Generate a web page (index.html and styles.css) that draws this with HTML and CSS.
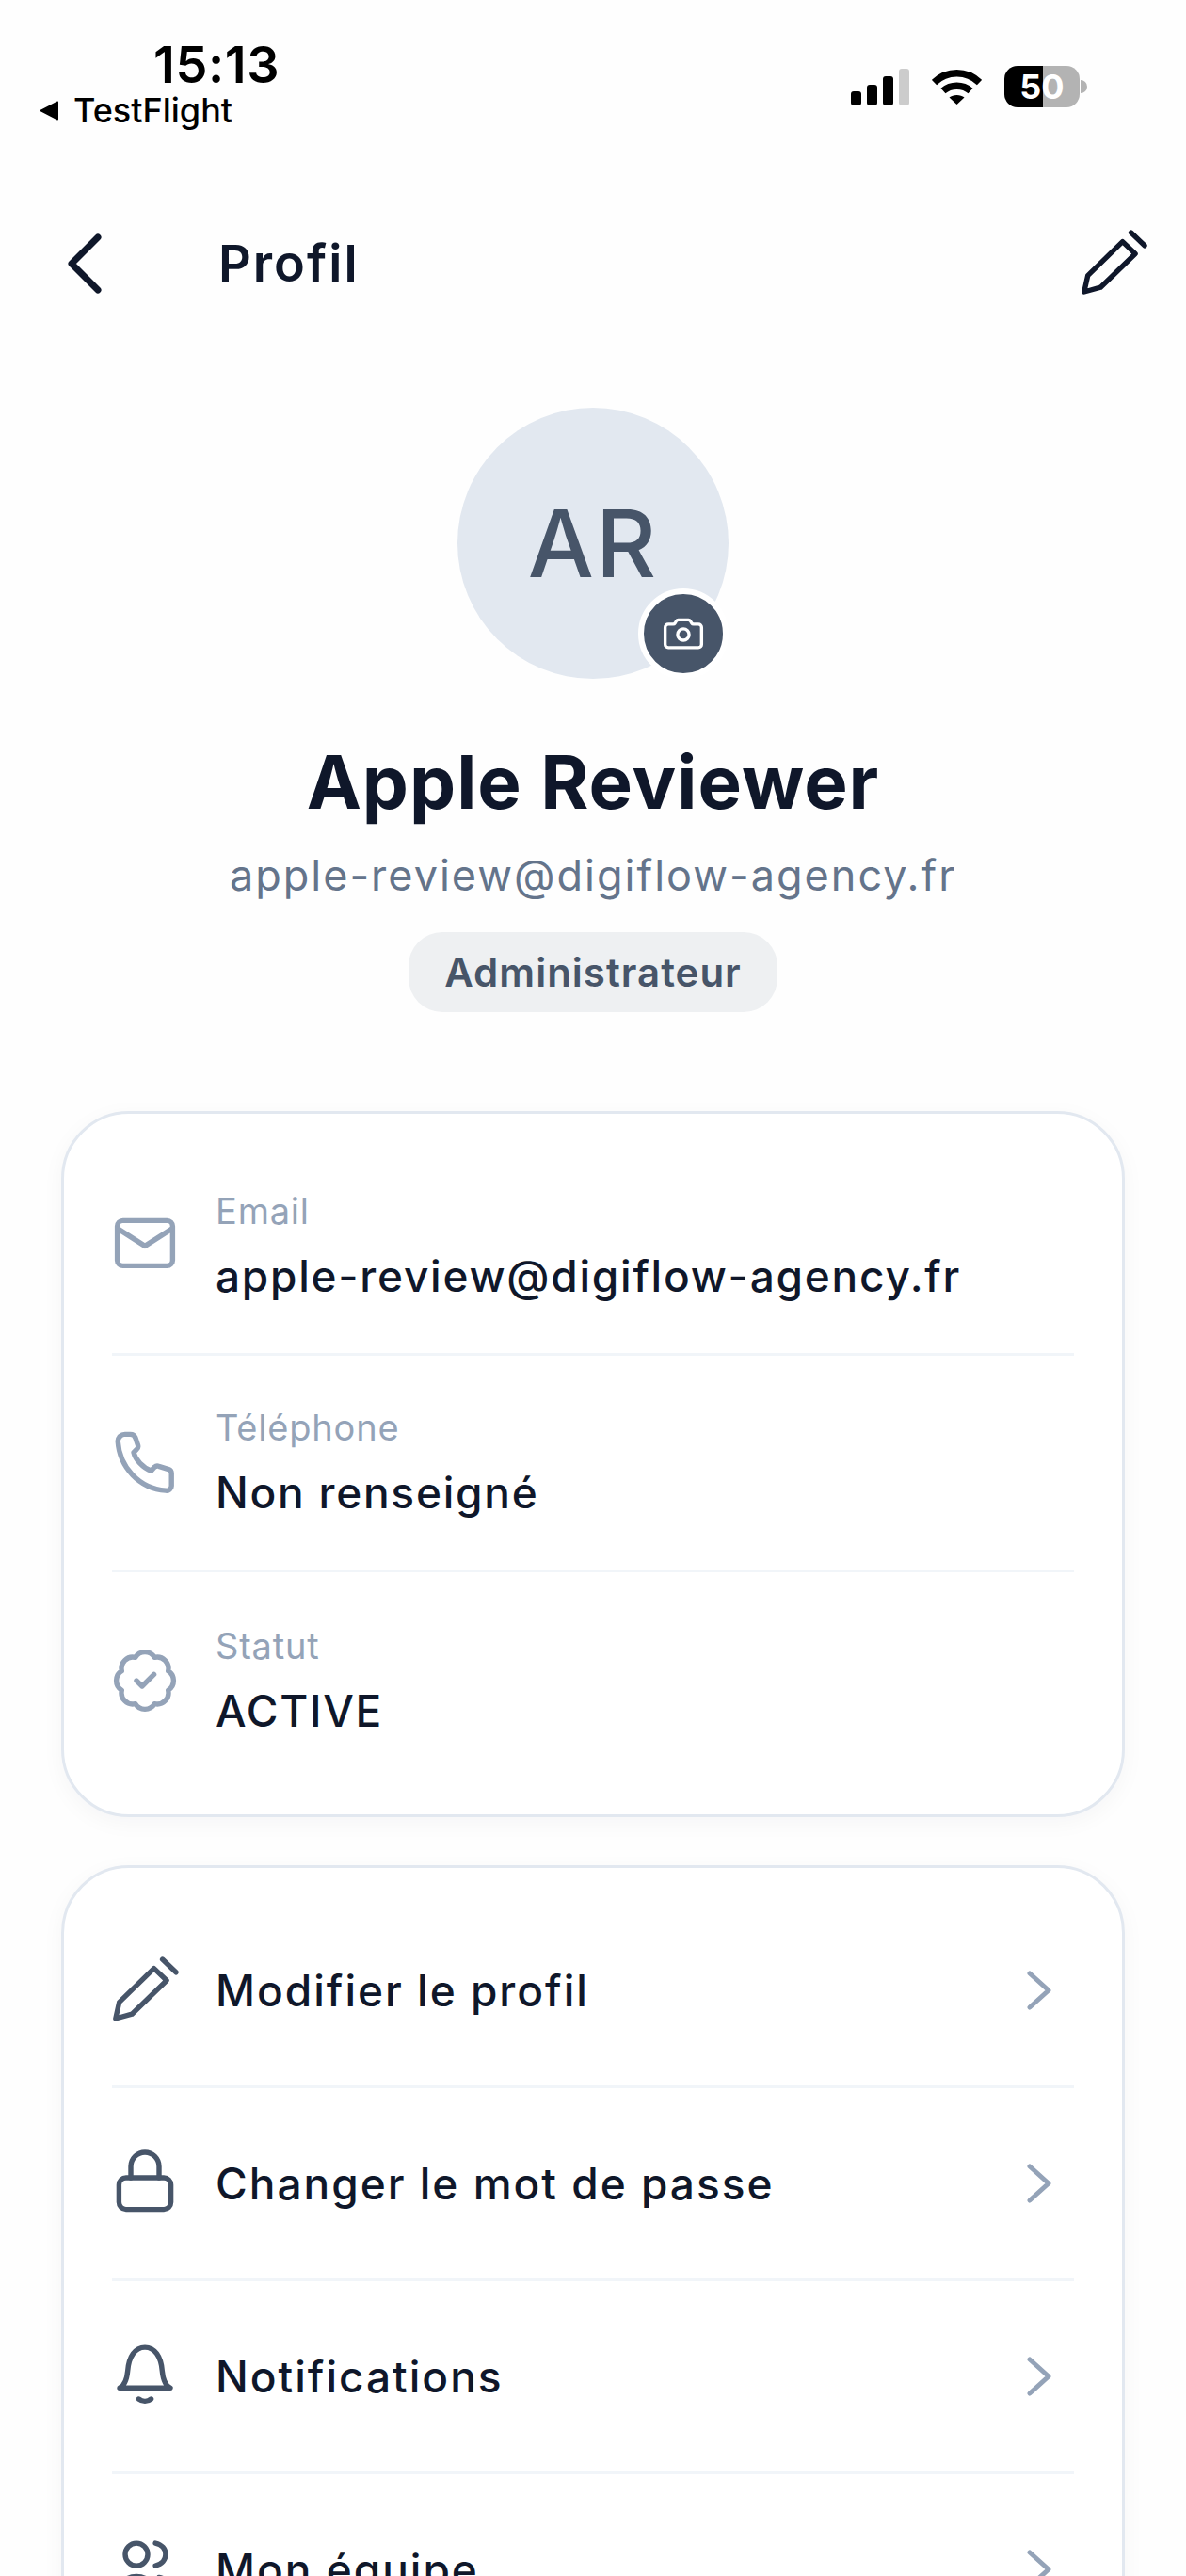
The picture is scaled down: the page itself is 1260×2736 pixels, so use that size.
FILE: index.html
```html
<!DOCTYPE html>
<html lang="fr">
<head>
  <title>Profil</title>
  <meta charset="UTF-8">
  <meta name="viewport" content="width=device-width, initial-scale=1">
  <link rel="stylesheet" href="styles.css">
</head>
<body>
  <div class="screen">
    <div class="status-bar">
      <div class="status-left">
        <div class="time">15:13</div>
        <div class="back-app">
          <svg class="back-arrow" viewBox="0 0 23 21"><path d="M21 1.500v18a1 1 0 0 1-1.600.8L2 11.200a.9.9 0 0 1 0-1.400L19.400.7A1 1 0 0 1 21 1.500z"/></svg>
          <span>TestFlight</span>
        </div>
      </div>
      <div class="status-right">
        <div class="signal">
          <span class="bar bar-1"></span>
          <span class="bar bar-2"></span>
          <span class="bar bar-3"></span>
          <span class="bar bar-4"></span>
        </div>
        <svg class="wifi" viewBox="0 0 53 39" fill="none" stroke="#000" stroke-width="7.5">
          <path d="M2.500 15.500C16 2.500 37 2.500 50.500 15.500"/>
          <path d="M12 24.500C20 17.500 33 17.500 41 24.500"/>
          <path d="M18.500 31.500c4-3.500 12-3.500 16 0L26.500 39z" fill="#000" stroke="none"/>
        </svg>
        <div class="battery">
          <div class="battery-body"><span>50</span></div>
          <div class="battery-nub"></div>
        </div>
      </div>
    </div>

    <div class="nav">
      <div class="nav-left">
        <svg class="nav-back" viewBox="0 0 36 64" fill="none" stroke="#0f172a" stroke-width="7" stroke-linecap="round" stroke-linejoin="round"><path d="M32 4 4 32l28 28"/></svg>
        <h1>Profil</h1>
      </div>
      <svg class="nav-edit" viewBox="0 0 24 24" fill="none" stroke="#0f172a" stroke-width="1.800" stroke-linecap="round" stroke-linejoin="round"><path d="M1.600 22l1.300-5.800L15.200 4.200l4.500 4.300L7.400 20.400z"/><path d="M18.200 1l4.800 4.600"/></svg>
    </div>

    <div class="profile">
      <div class="avatar">
        <span>AR</span>
        <div class="avatar-camera">
          <svg viewBox="0 0 24 24" fill="none" stroke="#fff" stroke-width="1.500" stroke-linejoin="round"><path d="M3.400 9a1.500 1.500 0 0 1 1.500-1.500h2.300c.4 0 .7-.2.9-.5l.6-1c.2-.3.5-.5.9-.5h4.800c.4 0 .7.2.9.5l.6 1c.2.3.5.5.9.5h2.300a1.500 1.500 0 0 1 1.500 1.500v8.100a1.500 1.500 0 0 1-1.500 1.500H4.900a1.500 1.500 0 0 1-1.500-1.500z"/><circle cx="12" cy="12.400" r="2.700"/></svg>
        </div>
      </div>
      <div class="name">Apple Reviewer</div>
      <div class="email">apple-review@digiflow-agency.fr</div>
      <div class="role">Administrateur</div>
    </div>

    <div class="card card-info">
      <div class="info-row">
        <svg class="icon icon-light" viewBox="0 0 24 24"><rect x="2.200" y="2.800" width="19.600" height="16" rx="2"/><path d="M2.600 5.800l9.400 6 9.400-6"/></svg>
        <div class="info-text">
          <div class="info-label">Email</div>
          <div class="info-value">apple-review@digiflow-agency.fr</div>
        </div>
      </div>
      <div class="info-row">
        <svg class="icon icon-light" viewBox="0 0 24 24"><path d="M2.400 4.200A2.500 2.500 0 0 1 4.900 1.800H6.800a2 2 0 0 1 1.900 1.400l.8 2.400a1.500 1.500 0 0 1-.5 1.600L8 8.200c.6 2.600 3.300 5.500 6.200 6.500l1.200-1.300a1.500 1.500 0 0 1 1.500-.3l3.500 1.100a1.500 1.500 0 0 1 1 1.400V20a1.700 1.700 0 0 1-2 1.700C10 21 3 13.500 2.400 4.200z"/></svg>
        <div class="info-text">
          <div class="info-label">Téléphone</div>
          <div class="info-value">Non renseigné</div>
        </div>
      </div>
      <div class="info-row">
        <svg class="icon icon-light" viewBox="0 0 24 24"><path d="M15.410 3.780A4 4 0 0 1 20.220 8.590 4 4 0 0 1 20.220 15.410 4 4 0 0 1 15.410 20.220 4 4 0 0 1 8.590 20.220 4 4 0 0 1 3.780 15.410 4 4 0 0 1 3.780 8.590 4 4 0 0 1 8.590 3.780 4 4 0 0 1 15.410 3.780z"/><path d="M9 12l2 2 4.200-4.200"/></svg>
        <div class="info-text">
          <div class="info-label">Statut</div>
          <div class="info-value">ACTIVE</div>
        </div>
      </div>
    </div>

    <div class="card card-menu">
      <div class="menu-row">
        <svg class="icon icon-dark" viewBox="0 0 24 24"><path d="M1.600 22l1.300-5.800L15.200 4.200l4.500 4.300L7.400 20.400z"/><path d="M18.200 1l4.800 4.600"/></svg>
        <span class="menu-label">Modifier le profil</span>
        <svg class="chevron" viewBox="0 0 30 42"><path d="M4 3l20 18L4 39"/></svg>
      </div>
      <div class="menu-row">
        <svg class="icon icon-dark" viewBox="0 0 24 24"><rect x="2.800" y="10" width="18.400" height="11.200" rx="2.500"/><path d="M7 10V6a5 5 0 0 1 10 0v4"/></svg>
        <span class="menu-label">Changer le mot de passe</span>
        <svg class="chevron" viewBox="0 0 30 42"><path d="M4 3l20 18L4 39"/></svg>
      </div>
      <div class="menu-row">
        <svg class="icon icon-dark" viewBox="0 0 24 24"><path d="M3 16.100c1.900-.9 2.600-3 2.900-6.100C6.300 5 8.500 1.700 12 1.700s5.700 3.300 6.100 8.300c.3 3.100 1 5.200 2.900 6.100z"/><path d="M9.800 20c1.300 1 3.100 1 4.400 0"/></svg>
        <span class="menu-label">Notifications</span>
        <svg class="chevron" viewBox="0 0 30 42"><path d="M4 3l20 18L4 39"/></svg>
      </div>
      <div class="menu-row">
        <svg class="icon icon-dark" viewBox="0 0 24 24"><circle cx="9" cy="6.700" r="4"/><path d="M15.700 2.700c2.300.5 3.600 2 3.600 4s-1.300 3.500-3.600 4"/><path d="M2 22c0-4.500 3-7.500 7-7.500s7 3 7 7.500"/><path d="M17 14.800c2.800.5 5 3 5 7"/></svg>
        <span class="menu-label">Mon équipe</span>
        <svg class="chevron" viewBox="0 0 30 42"><path d="M4 3l20 18L4 39"/></svg>
      </div>
    </div>
  </div>
</body>
</html>
```

FILE: styles.css
```css
* {
  box-sizing: border-box;
}
body {
  margin: 0;
  background: #fefefe;
  font-family: Inter, "Noto Sans", Arial, sans-serif;
  color: #0f172a;
}
.screen {
  width: 1260px;
  height: 2736px;
  overflow: hidden;
}

/* status bar */
.status-bar {
  height: 170px;
  padding: 42px 105px 0 41px;
  display: flex;
  justify-content: space-between;
}
.status-left {
  display: flex;
  flex-direction: column;
}
.time {
  font-size: 54px;
  font-weight: 600;
  line-height: 54px;
  letter-spacing: 0.6px;
  margin-left: 122px;
  color: #000;
}
.back-app {
  display: flex;
  align-items: center;
  gap: 14px;
  font-size: 36px;
  font-weight: 500;
  line-height: 42px;
  color: #000;
}
.back-arrow {
  width: 23px;
  height: 21px;
}
.status-right {
  display: flex;
  align-items: flex-start;
  padding-top: 30px;
}
.signal {
  display: flex;
  align-items: flex-end;
  gap: 6px;
  height: 40px;
  margin-right: 24px;
}
.bar {
  width: 11px;
  background: #000;
  border-radius: 3px;
}
.bar-1 { height: 15px; }
.bar-2 { height: 22px; }
.bar-3 { height: 31px; }
.bar-4 { height: 39px; background: #ccc; }
.wifi {
  width: 53px;
  height: 39px;
  margin-right: 24px;
}
.battery {
  display: flex;
  align-items: center;
  margin-top: -2px;
}
.battery-body {
  width: 80px;
  height: 44px;
  border-radius: 14px;
  background: linear-gradient(to right, #000 51%, #b3b3b3 51%);
  color: #fff;
  font-size: 36px;
  font-weight: 700;
  line-height: 44px;
  text-align: center;
}
.battery-nub {
  width: 7px;
  height: 14px;
  margin-left: 1px;
  background: #b3b3b3;
  border-radius: 0 7px 7px 0;
}

/* nav */
.nav {
  height: 263px;
  padding: 0 41px 0 72px;
  display: flex;
  align-items: flex-start;
  justify-content: space-between;
}
.nav-left {
  display: flex;
  align-items: center;
  gap: 124px;
  padding-top: 78px;
}
.nav-back {
  width: 36px;
  height: 64px;
}
h1 {
  margin: 0;
  font-size: 54px;
  font-weight: 600;
  line-height: 64px;
  letter-spacing: 2px;
}
.nav-edit {
  width: 72px;
  height: 72px;
  margin-top: 74px;
  overflow: visible;
}

/* profile header */
.profile {
  display: flex;
  flex-direction: column;
  align-items: center;
}
.avatar {
  position: relative;
  width: 288px;
  height: 288px;
  border-radius: 50%;
  background: #e2e8f0;
  color: #475569;
  font-size: 99px;
  font-weight: 550;
  letter-spacing: 2px;
  display: flex;
  align-items: center;
  justify-content: center;
}
.avatar-camera {
  position: absolute;
  right: 0;
  bottom: 0;
  width: 96px;
  height: 96px;
  border-radius: 50%;
  background: #475569;
  border: 6px solid #fff;
  display: flex;
  align-items: center;
  justify-content: center;
}
.avatar-camera svg {
  width: 54px;
  height: 54px;
}
.name {
  margin-top: 65px;
  font-size: 78px;
  font-weight: 700;
  line-height: 90px;
  letter-spacing: 1px;
}
.email {
  margin-top: 24px;
  font-size: 45px;
  line-height: 60px;
  letter-spacing: 2px;
  color: #64748b;
}
.role {
  margin-top: 30px;
  height: 85px;
  padding: 0 38px;
  border-radius: 36px;
  background: #eef0f2;
  color: #475569;
  font-size: 42px;
  font-weight: 600;
  line-height: 85px;
  letter-spacing: 1px;
}

/* cards */
.card {
  margin: 0 65px;
  padding: 27px 51px 24px;
  background: #fff;
  border: 3px solid #e2e8f0;
  border-radius: 72px;
  box-shadow: 0 6px 24px rgba(15, 23, 42, 0.04);
}
.card-info {
  margin-top: 105px;
  height: 750px;
}
.card-menu {
  margin-top: 51px;
  padding-top: 29px;
}
.info-row {
  height: 230px;
  display: flex;
  align-items: center;
  gap: 39px;
  border-bottom: 3px solid #f1f5f9;
}
.info-row:last-child {
  border-bottom: 0;
}
.info-label {
  font-size: 38px;
  line-height: 48px;
  letter-spacing: 0.8px;
  color: #94a3b8;
}
.info-value {
  margin-top: 15px;
  font-size: 46px;
  font-weight: 450;
  line-height: 60px;
  letter-spacing: 1.75px;
}
.icon {
  width: 72px;
  height: 72px;
  margin-left: -1px;
  flex: none;
  fill: none;
  stroke-width: 1.8;
  stroke-linecap: round;
  stroke-linejoin: round;
  overflow: visible;
}
.icon-light { stroke: #94a3b8; }
.icon-dark { stroke: #475569; }
.menu-row {
  height: 205px;
  display: flex;
  align-items: center;
  gap: 39px;
  border-bottom: 3px solid #f1f5f9;
}
.menu-label {
  flex: 1;
  font-size: 46px;
  font-weight: 450;
  letter-spacing: 2px;
}
.chevron {
  width: 30px;
  height: 42px;
  margin-right: 21px;
  fill: none;
  stroke: #94a3b8;
  stroke-width: 5;
  stroke-linecap: round;
  stroke-linejoin: round;
}
```
